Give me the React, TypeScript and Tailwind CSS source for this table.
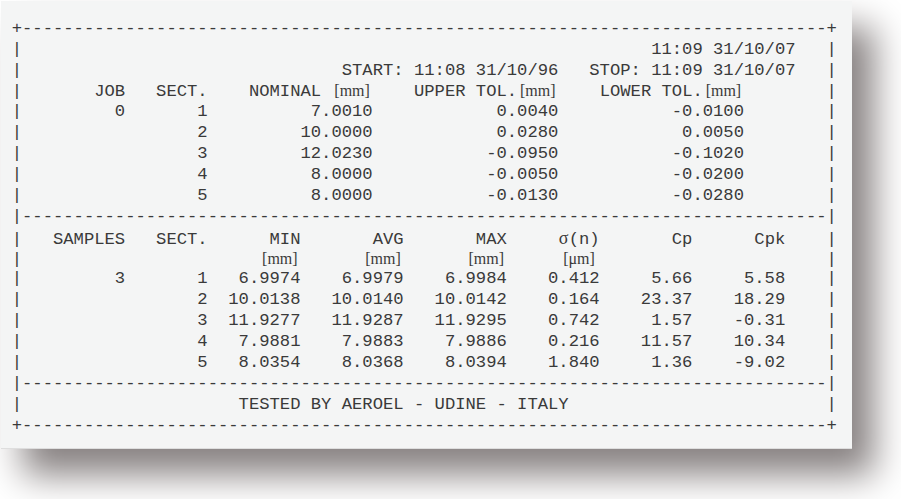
import React from "react";

type Item = [number, string];

function mk(items: Item[], edge = "|"): string {
  const a: string[] = Array(80).fill(" ");
  a[0] = edge;
  a[79] = edge;
  for (const [c, t] of items) {
    const chars = Array.from(t);
    chars.forEach((ch, i) => {
      a[c + i] = ch;
    });
  }
  return a.join("");
}

function r(end: number, t: string): Item {
  return [end - Array.from(t).length + 1, t];
}

const border = "+" + "-".repeat(78) + "+";
const sep = "|" + "-".repeat(78) + "|";

const tolRows: [string, string, string, string, string][] = [
  ["0", "1", "7.0010", "0.0040", "-0.0100"],
  ["", "2", "10.0000", "0.0280", "0.0050"],
  ["", "3", "12.0230", "-0.0950", "-0.1020"],
  ["", "4", "8.0000", "-0.0050", "-0.0200"],
  ["", "5", "8.0000", "-0.0130", "-0.0280"],
];

const statRows: string[][] = [
  ["3", "1", "6.9974", "6.9979", "6.9984", "0.412", "5.66", "5.58"],
  ["", "2", "10.0138", "10.0140", "10.0142", "0.164", "23.37", "18.29"],
  ["", "3", "11.9277", "11.9287", "11.9295", "0.742", "1.57", "-0.31"],
  ["", "4", "7.9881", "7.9883", "7.9886", "0.216", "11.57", "10.34"],
  ["", "5", "8.0354", "8.0368", "8.0394", "1.840", "1.36", "-9.02"],
];

const lines: string[] = [
  border,
  mk([r(75, "11:09 31/10/07")]),
  mk([
    [32, "START: 11:08 31/10/96"],
    [56, "STOP: 11:09 31/10/07"],
  ]),
  mk([
    [8, "JOB"],
    [14, "SECT."],
    [23, "NOMINAL [mm]"],
    [39, "UPPER TOL.[mm]"],
    [57, "LOWER TOL.[mm]"],
  ]),
  ...tolRows.map((row) =>
    mk([
      r(10, row[0] || " "),
      r(18, row[1]),
      r(34, row[2]),
      r(52, row[3]),
      r(70, row[4]),
    ])
  ),
  sep,
  mk([
    [4, "SAMPLES"],
    [14, "SECT."],
    r(27, "MIN"),
    r(37, "AVG"),
    r(47, "MAX"),
    r(56, "σ(n)"),
    r(65, "Cp"),
    r(74, "Cpk"),
  ]),
  mk([r(27, "[mm]"), r(37, "[mm]"), r(47, "[mm]"), r(56, "[μm]")]),
  ...statRows.map((row) =>
    mk([
      r(10, row[0] || " "),
      r(18, row[1]),
      r(27, row[2]),
      r(37, row[3]),
      r(47, row[4]),
      r(56, row[5]),
      r(65, row[6]),
      r(74, row[7]),
    ])
  ),
  sep,
  mk([[22, "TESTED BY AEROEL - UDINE - ITALY"]]),
  border,
];

function Line({ text }: { text: string }) {
  const parts = text.split(/(\[mm\]|\[μm\]|σ)/);
  return (
    <div className="whitespace-pre h-[20.9px]">
      {parts.map((p, i) => {
        if (p === "[mm]" || p === "[μm]") {
          return (
            <span
              key={i}
              className="inline-block w-[41.28px] text-center font-['Liberation_Serif',serif] text-[16px]"
            >
              {p}
            </span>
          );
        }
        if (p === "σ") {
          return (
            <span
              key={i}
              className="inline-block w-[10.32px] text-center font-['Liberation_Serif',serif] text-[18px]"
            >
              {p}
            </span>
          );
        }
        return <span key={i}>{p}</span>;
      })}
    </div>
  );
}

export default function App() {
  return (
    <div className="w-[901px] h-[499px] bg-white overflow-hidden pt-px pl-px">
      <div className="w-[851px] h-[448px] bg-[#f4f5f5] border-b border-[#dedede] shadow-[22px_26px_34px_#888282] pl-[10.7px] pt-[17.8px] font-['Liberation_Mono',monospace] text-[17.2px] leading-[20.9px] text-[#3a3a3a]">
        {lines.map((l, i) => (
          <Line key={i} text={l} />
        ))}
      </div>
    </div>
  );
}
